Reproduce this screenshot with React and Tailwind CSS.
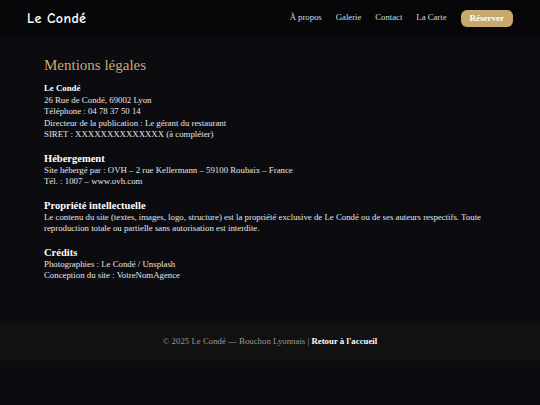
export default function App() {
  const serif = { fontFamily: '"Liberation Serif", "Times New Roman", serif' };
  return (
    <div className="min-h-[405px] bg-[#0b0b10] text-[#e5e5e5]" style={serif}>
      <header className="flex h-9 items-center justify-between bg-[#070709] pl-[27px] pr-[27px]">
        <a
          className="text-[14px] font-bold tracking-wide text-white"
          style={{ fontFamily: '"Comic Sans MS", "Comic Neue", cursive' }}
        >
          Le Condé
        </a>
        <nav className="flex items-center gap-[14px] text-[8.7px] text-[#dcdcdc]">
          <a>À propos</a>
          <a>Galerie</a>
          <a>Contact</a>
          <a>La Carte</a>
          <a className="rounded-md bg-[#c8a96b] px-[9px] py-[3px] text-[9px] leading-[11px] font-bold text-white">
            Réserver
          </a>
        </nav>
      </header>

      <main className="px-11 pt-[18px] pb-[41px] text-[8.8px] leading-[11.5px]">
        <h1 className="mb-[7px] text-[15px] leading-[22px] text-[#c9a96e]">Mentions légales</h1>

        <section className="mb-[11px]">
          <p className="font-bold text-white">Le Condé</p>
          <p>26 Rue de Condé, 69002 Lyon</p>
          <p>Téléphone : 04 78 37 50 14</p>
          <p>Directeur de la publication : Le gérant du restaurant</p>
          <p>SIRET : XXXXXXXXXXXXXX (à compléter)</p>
        </section>

        <section className="mb-[11px]">
          <h2 className="text-[10.5px] leading-[13px] font-bold text-white">Hébergement</h2>
          <p>Site hébergé par : OVH – 2 rue Kellermann – 59100 Roubaix – France</p>
          <p>Tél. : 1007 – www.ovh.com</p>
        </section>

        <section className="mb-[11px]">
          <h2 className="text-[10.5px] leading-[13px] font-bold text-white">Propriété intellectuelle</h2>
          <p>
            Le contenu du site (textes, images, logo, structure) est la propriété exclusive de Le Condé ou de ses
            auteurs respectifs. Toute reproduction totale ou partielle sans autorisation est interdite.
          </p>
        </section>

        <section>
          <h2 className="text-[10.5px] leading-[13px] font-bold text-white">Crédits</h2>
          <p>Photographies : Le Condé / Unsplash</p>
          <p>Conception du site : VotreNomAgence</p>
        </section>
      </main>

      <footer className="flex h-[38px] items-center justify-center bg-[#111112] text-[8.8px] text-[#9a9a9a]">
        <p>
          © 2025 Le Condé — Bouchon Lyonnais | <a className="font-bold text-white">Retour à l'accueil</a>
        </p>
      </footer>
    </div>
  );
}
